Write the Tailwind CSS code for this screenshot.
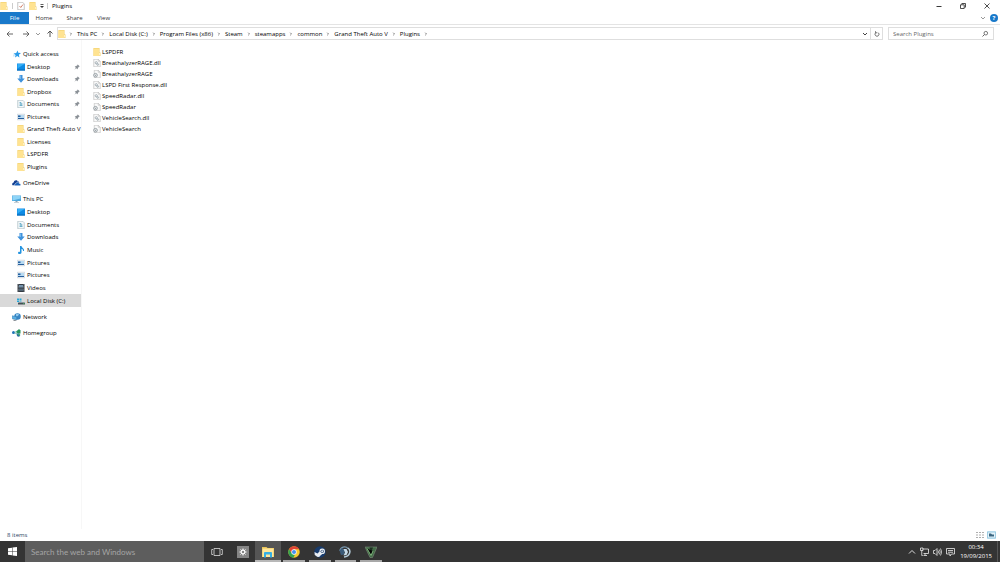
<!DOCTYPE html>
<html lang="en">
<head>
    <meta charset="UTF-8">
    <meta name="viewport" content="width=device-width, initial-scale=1.0">
    <title>Plugins</title>
    <script src="https://cdn.jsdelivr.net/npm/@tailwindcss/browser@4"></script>
</head>
<body class="flex h-screen flex-col overflow-hidden bg-white font-['Open_Sans',sans-serif] text-[6px] leading-[10px] text-black">

    <!-- Icon sprite -->
    <svg class="hidden">
        <symbol id="folder" viewBox="0 0 16 16"><path fill="#f0cd68" d="M1 0h12v9h2v7H1z"/><path fill="#ffe391" d="M1 1h11v15H1z"/><path fill="#fff1c0" d="M12 10h3v5h-3z"/></symbol>
        <symbol id="star" viewBox="0 0 16 16"><path fill="#2a9be8" d="M9 1l1.600 4.700 5.400.3-4.200 3.300 1 5.700-4.300-2.800L4 15l1.200-5L1 7l5.500-.8z"/><path stroke="#8fcdf6" d="M0 10h4M0 12h3"/></symbol>
        <symbol id="desktop" viewBox="0 0 16 16"><path fill="#0f8be4" d="M0 1h16v14H0z"/><path fill="#35b0f7" d="M1 2h14L1 11z"/><path fill="#0867b5" d="M0 13h16v2H0z"/></symbol>
        <symbol id="down" viewBox="0 0 16 16"><path fill="#3f92dc" d="M5 0h6v7h4.500L8 15.500.5 7H5z"/><path fill="#74b8ee" d="M6 1h2v7H6z"/></symbol>
        <symbol id="doc" viewBox="0 0 16 16"><path fill="#f4f8fa" stroke="#8ba0ab" d="M1.500.5h10l3 3v12h-13z"/><path fill="none" stroke="#4c9fbd" stroke-width="1.500" d="M5 5h3M5 8h6M5 11h6M8 5v6"/></symbol>
        <symbol id="pic" viewBox="0 0 16 16"><path fill="#fff" stroke="#a7b7c5" d="M.5 2.500h15v11H.5z"/><path fill="#b7daf2" d="M2 4h12v7H2z"/><path fill="#275f9e" d="M2 5h5v3H2zM2 10h12v2H2z"/></symbol>
        <symbol id="cloud" viewBox="0 0 20 16"><path fill="#123f91" d="M1 13c-2-4 1-6 3-6 0-5 7-7 9-2 2-.5 3 1 3 3l-7 5z"/><path fill="#1760b9" stroke="#fff" d="M8 14c-4-1-2-5 1-5 1-4 6-3 7 0 4 0 5 5 1 5z"/></symbol>
        <symbol id="pc" viewBox="0 0 18 16"><path fill="#4da8de" d="M0 1h18v11H0z"/><path fill="#8ed4f7" d="M1 2h16v5L1 11z"/><path fill="#8da4b4" d="M7 12h4v2h3v1H4v-1h3z"/></symbol>
        <symbol id="music" viewBox="0 0 16 16"><path fill="#2393df" d="M6 0h3c0 4 6 4 5 10h-2c0-3-1-4-3-4v7c0 4-7 4-7 1 0-2 2-3 4-2z"/></symbol>
        <symbol id="video" viewBox="0 0 16 16"><path fill="#343b43" d="M1 0h14v16H1z"/><path fill="#7593ad" d="M4 2h8v5H4z"/><path fill="#506474" d="M4 9h8v5H4z"/><path stroke="#c9d0d5" stroke-dasharray="1.500 1.500" d="M2.500 1v14M13.500 1v14"/></symbol>
        <symbol id="disk" viewBox="0 0 16 16"><path fill="#26a7d8" d="M0 3h4v3H0zM5 3h4v3H5zM0 7h4v3H0zM5 7h4v2H5z"/><path fill="#8b989f" d="M3 10h12l1 2H2z"/><path fill="#424e55" d="M2 12h14v3H2z"/><path fill="#57e064" d="M12 13h3v1h-3z"/></symbol>
        <symbol id="network" viewBox="0 0 18 16"><circle cx="11" cy="7" r="6.500" fill="#3886c5"/><path fill="#8ec8ed" d="M8 2l6 0-2 4-4 1z"/><path fill="#5bb0e4" stroke="#2a75ad" d="M.5 5.500l9 2v6l-9-2z"/><path fill="#888f95" d="M3 13l6 2v1H3z"/></symbol>
        <symbol id="homegroup" viewBox="0 0 18 16"><circle cx="3" cy="7" r="3" fill="#1e73b8"/><path stroke="#55a8a0" stroke-width="1.500" d="M5 7l7-4M5 7l7 5"/><path fill="#24945c" d="M9 5l5-5 3 3v6H9z"/><circle cx="13" cy="12" r="3.500" fill="#2c6e9e"/><path fill="#41b66f" d="M11 10h5v4z"/></symbol>
        <symbol id="dll" viewBox="0 0 16 16"><path fill="#fafafa" stroke="#aaa" d="M1.500.5h9l4 4v11h-13z"/><path fill="none" stroke="#aaa" d="M10.500.5v4h4"/><circle cx="6.500" cy="7.500" r="2.200" fill="none" stroke="#8d9ba3" stroke-width="1.500"/><circle cx="9.500" cy="11" r="1.700" fill="none" stroke="#8d9ba3" stroke-width="1.500"/></symbol>
        <symbol id="ini" viewBox="0 0 16 16"><path fill="#fafafa" stroke="#aaa" d="M2.500.5h8l4 4v11h-12z"/><path fill="none" stroke="#aaa" d="M10.500.5v4h4"/><circle cx="5" cy="10.500" r="3.700" fill="#e8eaeb" stroke="#838e94" stroke-width="1.500"/><circle cx="5" cy="10.500" r="1" fill="#77838a"/></symbol>
        <symbol id="pin" viewBox="0 0 16 16"><path fill="#8a9096" d="M10 1l5 5-1 1h-1l-3 4v2l-1 1-3-3-5 4 4-5-3-3 1-1h2l4-3V2z"/></symbol>
        <symbol id="chevron" viewBox="0 0 4 6"><path fill="none" stroke="#666" stroke-width=".8" d="M1.200 1.700L2.500 3 1.200 4.300"/></symbol>
        <symbol id="caret" viewBox="0 0 8 8"><path fill="none" stroke="currentColor" d="M2 3l2 2 2-2"/></symbol>
    </svg>

    <!-- Title bar -->
    <header class="flex h-3 shrink-0 items-center">
        <svg class="size-2"><use href="#folder"/></svg>
        <span class="ml-1 h-[6px] w-px bg-[#ccc]"></span>
        <button class="ml-1 block" aria-label="Properties"><svg class="size-2" viewBox="0 0 16 16"><path fill="#fff" stroke="#8c8c8c" d="M1.500.5h9l4 3v12h-13z"/><path fill="none" stroke="#c9674c" stroke-width="1.600" d="M5 8l2.500 3L12 5"/></svg></button>
        <button class="ml-1 block" aria-label="New folder"><svg class="size-2"><use href="#folder"/></svg></button>
        <button class="ml-px block" aria-label="Customize toolbar"><svg class="size-2" viewBox="0 0 8 8"><path stroke="#333" stroke-width=".8" d="M2.500 2.500h3"/><path fill="#333" d="M2 4h4L4 6z"/></svg></button>
        <span class="ml-px h-[6px] w-px bg-[#ccc]"></span>
        <h1 class="ml-1">Plugins</h1>
        <div class="ml-auto flex text-[#222]">
            <button class="flex w-6 justify-center" aria-label="Minimize"><svg class="size-2" viewBox="0 0 8 8"><path stroke="currentColor" stroke-width=".9" d="M1.500 4.500h5"/></svg></button>
            <button class="flex w-6 justify-center" aria-label="Restore"><svg class="size-2" viewBox="0 0 8 8"><path fill="none" stroke="currentColor" stroke-width=".8" d="M1.500 2.800h3.700v3.700H1.500zM2.800 2.500v-1h3.700v3.700h-1"/></svg></button>
            <button class="flex w-6 justify-center" aria-label="Close"><svg class="size-2" viewBox="0 0 8 8"><path stroke="currentColor" stroke-width=".8" d="M1.500 1.500l5 5m0-5l-5 5"/></svg></button>
            <span class="w-px"></span>
        </div>
    </header>

    <!-- Ribbon tabs -->
    <nav class="flex h-[13px] shrink-0 items-center border-b border-[#e4e4e4] text-[#333]">
        <button class="h-3 w-[29px] bg-[#1979ca] text-white">File</button>
        <button class="h-3 w-[30px]">Home</button>
        <button class="h-3 w-[31px]">Share</button>
        <button class="h-3 w-[27px]">View</button>
        <button class="ml-auto text-[#999]" aria-label="Expand ribbon"><svg class="size-2"><use href="#caret"/></svg></button>
        <button class="mr-[2px] ml-[3px] size-2 rounded-full bg-[#1979ca] leading-2 font-bold text-white" aria-label="Help">?</button>
    </nav>

    <!-- Address bar -->
    <div class="mt-[2px] flex h-[13px] shrink-0 items-center pr-[6px]">
        <div class="flex w-[57px] items-center pl-[6px] text-[#555]">
            <button aria-label="Back"><svg class="size-2" viewBox="0 0 8 8"><path fill="none" stroke="currentColor" stroke-width=".9" d="M7 4H1m2.500-2.500L1 4l2.500 2.500"/></svg></button>
            <button class="ml-2" aria-label="Forward"><svg class="size-2" viewBox="0 0 8 8"><path fill="none" stroke="currentColor" stroke-width=".9" d="M1 4h6M4.500 1.500L7 4 4.500 6.500"/></svg></button>
            <button class="ml-1 text-[#999]" aria-label="Recent locations"><svg class="size-2"><use href="#caret"/></svg></button>
            <button class="ml-1" aria-label="Up"><svg class="size-2" viewBox="0 0 8 8"><path fill="none" stroke="currentColor" stroke-width="1" d="M4 7V1M1.500 3.500L4 1l2.500 2.500"/></svg></button>
        </div>
        <div class="flex h-full flex-1 items-center border border-[#dedede]">
            <svg class="size-2"><use href="#folder"/></svg>
            <svg class="mr-1 ml-[3px] h-[6px] w-1"><use href="#chevron"/></svg>
            <button class="whitespace-nowrap">This PC</button>
            <svg class="mx-1 h-[6px] w-1"><use href="#chevron"/></svg>
            <button class="whitespace-nowrap">Local Disk (C:)</button>
            <svg class="mx-1 h-[6px] w-1"><use href="#chevron"/></svg>
            <button class="whitespace-nowrap">Program Files (x86)</button>
            <svg class="mx-1 h-[6px] w-1"><use href="#chevron"/></svg>
            <button>Steam</button>
            <svg class="mx-1 h-[6px] w-1"><use href="#chevron"/></svg>
            <button>steamapps</button>
            <svg class="mx-1 h-[6px] w-1"><use href="#chevron"/></svg>
            <button>common</button>
            <svg class="mx-1 h-[6px] w-1"><use href="#chevron"/></svg>
            <button class="whitespace-nowrap">Grand Theft Auto V</button>
            <svg class="mx-1 h-[6px] w-1"><use href="#chevron"/></svg>
            <button>Plugins</button>
            <svg class="mx-1 h-[6px] w-1"><use href="#chevron"/></svg>
            <button class="ml-auto px-px text-[#444]" aria-label="Previous locations"><svg class="size-2"><use href="#caret"/></svg></button>
            <button class="flex h-full w-3 items-center justify-center border-l border-[#dedede]" aria-label="Refresh"><svg class="size-2" viewBox="0 0 8 8"><path fill="none" stroke="#555" stroke-width=".8" d="M5.300 2.700A2 2 0 1 1 2.700 2.700M2.500 1.200v1.600h1.800"/></svg></button>
        </div>
        <label class="ml-[5px] flex h-full w-[106px] items-center border border-[#dedede] px-1">
            <input type="text" placeholder="Search Plugins" aria-label="Search Plugins" class="w-0 flex-1 outline-none placeholder:text-[#666]">
            <svg class="size-2" viewBox="0 0 8 8"><circle cx="4.800" cy="3.200" r="1.800" fill="none" stroke="#555" stroke-width=".8"/><path stroke="#555" stroke-width=".9" d="M3.500 4.500l-2 2"/></svg>
        </label>
    </div>

    <main class="flex min-h-0 flex-1">
        <!-- Navigation pane -->
        <aside class="flex w-[82px] flex-col gap-1 border-r border-[#f7f7f7] pt-2 whitespace-nowrap">
            <ul class="grid h-[125px] auto-rows-fr overflow-hidden">
                <li class="flex items-center pl-[13px]"><a href="#" class="flex items-center gap-[2px]"><svg class="size-2"><use href="#star"/></svg>Quick access</a></li>
                <li class="flex items-center justify-between pr-px pl-[17px]"><a href="#" class="flex items-center gap-[2px]"><svg class="size-2"><use href="#desktop"/></svg>Desktop</a><svg class="size-[6px]"><use href="#pin"/></svg></li>
                <li class="flex items-center justify-between pr-px pl-[17px]"><a href="#" class="flex items-center gap-[2px]"><svg class="size-2"><use href="#down"/></svg>Downloads</a><svg class="size-[6px]"><use href="#pin"/></svg></li>
                <li class="flex items-center justify-between pr-px pl-[17px]"><a href="#" class="flex items-center gap-[2px]"><svg class="size-2"><use href="#folder"/></svg>Dropbox</a><svg class="size-[6px]"><use href="#pin"/></svg></li>
                <li class="flex items-center justify-between pr-px pl-[17px]"><a href="#" class="flex items-center gap-[2px]"><svg class="size-2"><use href="#doc"/></svg>Documents</a><svg class="size-[6px]"><use href="#pin"/></svg></li>
                <li class="flex items-center justify-between pr-px pl-[17px]"><a href="#" class="flex items-center gap-[2px]"><svg class="size-2"><use href="#pic"/></svg>Pictures</a><svg class="size-[6px]"><use href="#pin"/></svg></li>
                <li class="flex items-center pl-[17px]"><a href="#" class="flex items-center gap-[2px]"><svg class="size-2 shrink-0"><use href="#folder"/></svg>Grand Theft Auto V</a></li>
                <li class="flex items-center pl-[17px]"><a href="#" class="flex items-center gap-[2px]"><svg class="size-2"><use href="#folder"/></svg>Licenses</a></li>
                <li class="flex items-center pl-[17px]"><a href="#" class="flex items-center gap-[2px]"><svg class="size-2"><use href="#folder"/></svg>LSPDFR</a></li>
                <li class="flex items-center pl-[17px]"><a href="#" class="flex items-center gap-[2px]"><svg class="size-2"><use href="#folder"/></svg>Plugins</a></li>
            </ul>
            <a href="#" class="flex h-3 items-center gap-[2px] pl-3"><svg class="h-2 w-[9px]"><use href="#cloud"/></svg>OneDrive</a>
            <ul class="grid h-[114px] auto-rows-fr">
                <li class="flex items-center pl-3"><a href="#" class="flex items-center gap-[2px]"><svg class="h-2 w-[9px]"><use href="#pc"/></svg>This PC</a></li>
                <li class="flex items-center pl-[17px]"><a href="#" class="flex items-center gap-[2px]"><svg class="size-2"><use href="#desktop"/></svg>Desktop</a></li>
                <li class="flex items-center pl-[17px]"><a href="#" class="flex items-center gap-[2px]"><svg class="size-2"><use href="#doc"/></svg>Documents</a></li>
                <li class="flex items-center pl-[17px]"><a href="#" class="flex items-center gap-[2px]"><svg class="size-2"><use href="#down"/></svg>Downloads</a></li>
                <li class="flex items-center pl-[17px]"><a href="#" class="flex items-center gap-[2px]"><svg class="size-2"><use href="#music"/></svg>Music</a></li>
                <li class="flex items-center pl-[17px]"><a href="#" class="flex items-center gap-[2px]"><svg class="size-2"><use href="#pic"/></svg>Pictures</a></li>
                <li class="flex items-center pl-[17px]"><a href="#" class="flex items-center gap-[2px]"><svg class="size-2"><use href="#pic"/></svg>Pictures</a></li>
                <li class="flex items-center pl-[17px]"><a href="#" class="flex items-center gap-[2px]"><svg class="size-2"><use href="#video"/></svg>Videos</a></li>
                <li class="flex items-center bg-[#d9d9d9] pl-[17px]"><a href="#" class="flex items-center gap-[2px]" aria-current="page"><svg class="size-2"><use href="#disk"/></svg>Local Disk (C:)</a></li>
            </ul>
            <a href="#" class="flex h-3 items-center gap-[2px] pl-3"><svg class="h-2 w-[9px]"><use href="#network"/></svg>Network</a>
            <a href="#" class="flex h-3 items-center gap-[2px] pl-3"><svg class="h-2 w-[9px]"><use href="#homegroup"/></svg>Homegroup</a>
        </aside>

        <!-- Files -->
        <ul class="flex-1 pt-[6px] pl-[11px]">
            <li class="flex h-[11px] items-center gap-px"><svg class="size-2"><use href="#folder"/></svg>LSPDFR</li>
            <li class="flex h-[11px] items-center gap-px"><svg class="size-2"><use href="#dll"/></svg>BreathalyzerRAGE.dll</li>
            <li class="flex h-[11px] items-center gap-px"><svg class="size-2"><use href="#ini"/></svg>BreathalyzerRAGE</li>
            <li class="flex h-[11px] items-center gap-px"><svg class="size-2"><use href="#dll"/></svg>LSPD First Response.dll</li>
            <li class="flex h-[11px] items-center gap-px"><svg class="size-2"><use href="#dll"/></svg>SpeedRadar.dll</li>
            <li class="flex h-[11px] items-center gap-px"><svg class="size-2"><use href="#ini"/></svg>SpeedRadar</li>
            <li class="flex h-[11px] items-center gap-px"><svg class="size-2"><use href="#dll"/></svg>VehicleSearch.dll</li>
            <li class="flex h-[11px] items-center gap-px"><svg class="size-2"><use href="#ini"/></svg>VehicleSearch</li>
        </ul>
    </main>

    <!-- Status bar -->
    <footer class="flex h-3 shrink-0 items-center pr-1 pl-[7px] text-[#2b3f5f]">
        <span>8 items</span>
        <button class="ml-auto" aria-label="Details view"><svg class="h-2 w-[10px]" viewBox="0 0 10 8"><path stroke="#999" stroke-width=".8" d="M1 1.500h2M1 4h2M1 6.500h2M4 1.500h2M4 4h2M4 6.500h2M7 1.500h2M7 4h2M7 6.500h2"/></svg></button>
        <button class="ml-[2px] bg-[#cce8f6]" aria-label="Large icons view"><svg class="h-2 w-[9px]" viewBox="0 0 9 8"><path fill="#e2f2fa" stroke="#8fc3dc" stroke-width=".8" d="M.5 1h8v6h-8z"/><path fill="#3b6681" d="M2 2.500h2l1 1h2v2H2z"/></svg></button>
    </footer>

    <!-- Taskbar -->
    <div class="flex h-[21px] shrink-0 bg-[#343434] text-white">
        <button class="flex w-[25px] items-center justify-center" aria-label="Start"><svg class="size-[9px]" viewBox="0 0 18 18"><path fill="#fff" d="M0 2.500l8-1.200v7.200H0zM9 1.200L18 0v8.500H9zM0 9.500h8v7.200l-8-1.200zM9 9.500h9V18l-9-1.200z"/></svg></button>
        <input type="text" placeholder="Search the web and Windows" aria-label="Search the web and Windows" class="w-[179px] bg-[#5d5d5d] px-[6px] font-[Lato,sans-serif] text-[8px] outline-none placeholder:text-[#a5a5a5]">
        <div class="grid w-[180px] grid-cols-7">
            <button class="flex items-center justify-center" aria-label="Task view"><svg class="h-[10px] w-3" viewBox="0 0 12 10"><path fill="none" stroke="#ddd" stroke-width=".8" d="M3 1.500h6v7H3zM2 2.500H.7v5H2M10 2.500h1.300v5H10"/></svg></button>
            <button class="flex items-center justify-center" aria-label="Settings"><svg class="size-3" viewBox="0 0 24 24"><path fill="#858585" d="M0 0h24v24H0z"/><circle cx="12" cy="12" r="3.700" fill="none" stroke="#fff" stroke-width="2.400"/><path stroke="#fff" stroke-width="2" d="M12 5v3m0 8v3M5 12h3m8 0h3M7 7l2 2m6 6l2 2M17 7l-2 2m-6 6l-2 2"/></svg></button>
            <button class="flex items-center justify-center border-b-2 border-[#b8b8b8] bg-[#555] pt-[2px]" aria-label="File Explorer"><svg class="size-3" viewBox="0 0 24 24"><path fill="#e9c558" d="M0 2h9l2 2h13v18H0z"/><path fill="#ffe69b" d="M1 5h22v17H1z"/><path fill="#36aee2" d="M4 14q0-2 2-2h12q2 0 2 2v9h-4v-6H8v6H4z"/></svg></button>
            <button class="mx-[2px] flex items-center justify-center border-b-2 border-[#a8a8a8] pt-[2px]" aria-label="Chrome"><svg class="size-3" viewBox="0 0 24 24"><circle cx="12" cy="12" r="11.500" fill="#f5ca2f"/><path fill="#df4335" d="M2 6.300a11.500 11.500 0 0 1 20.300.4H12L7.500 14.500z"/><path fill="#31a350" d="M2 6.300l5.500 8.200 4.500 2.700 2-.4-3.200 6.600A11.500 11.500 0 0 1 2 6.300z"/><circle cx="12" cy="12" r="5.300" fill="#fff"/><circle cx="12" cy="12" r="4.100" fill="#438ff0"/></svg></button>
            <button class="mx-[2px] flex items-center justify-center border-b-2 border-[#a8a8a8] pt-[2px]" aria-label="Steam"><svg class="size-3" viewBox="0 0 24 24"><circle cx="12" cy="12" r="11.500" fill="#183b6c"/><path fill="#e8edf2" d="M1 12l6 3 4-4a5.500 5.500 0 1 1 5.500 5l-4 3.500a4.500 4.500 0 0 1-8 .5L1.500 18z"/><circle cx="16.500" cy="10.500" r="3.200" fill="#183b6c"/><circle cx="16.500" cy="10.500" r="2.200" fill="#dfe7ef"/></svg></button>
            <button class="mx-[2px] flex items-center justify-center border-b-2 border-[#a8a8a8] pt-[2px]" aria-label="TeamSpeak"><svg class="size-3" viewBox="0 0 24 24"><path fill="none" stroke="#7796ad" stroke-width="2.500" d="M2 10C2 2 13-1 18 5"/><path fill="#3a5a78" d="M1 9l5-5 6 4-2 9-6 1z"/><path fill="#c7dbe8" d="M9 6h6l3 6-3 6-6 1 3-6z"/><path fill="none" stroke="#b3cad8" stroke-width="3" d="M18 4c7 5 4 17-8 18"/></svg></button>
            <button class="mx-[2px] flex items-center justify-center border-b-2 border-[#a8a8a8] pt-[2px]" aria-label="Grand Theft Auto V"><svg class="size-3" viewBox="0 0 24 24"><path fill="#436b47" stroke="#879a87" d="M0 2h24l-9 21h-5z"/><path fill="#1d3022" d="M9 3h7l-4 10z"/><path stroke="#80b57d" stroke-width="2" d="M4 5l8 14 4-9"/></svg></button>
        </div>
        <div class="ml-auto flex items-center gap-1">
            <button aria-label="Show hidden icons"><svg class="size-2" viewBox="0 0 8 8"><path fill="none" stroke="#eee" stroke-width=".9" d="M1 5.500l3-3 3 3"/></svg></button>
            <button aria-label="Network status"><svg class="h-[10px] w-[9px]" viewBox="0 0 18 20"><path fill="none" stroke="#eee" stroke-width="1.600" d="M5 4h12v9H7M10 13v3M7 17h7M1 2h5v5H1zM3.500 7v10h2"/></svg></button>
            <button aria-label="Volume"><svg class="h-[10px] w-[9px]" viewBox="0 0 18 20"><path fill="none" stroke="#eee" stroke-width="1.500" d="M1 7h3l4-4v14l-4-4H1zM10 7q2 3 0 6M12.500 5q4 5 0 10M15 3q5 7 0 14"/></svg></button>
            <button aria-label="Notifications"><svg class="h-[10px] w-[9px]" viewBox="0 0 18 20"><path fill="none" stroke="#eee" stroke-width="1.600" d="M1 3h16v11h-6l-3 4v-4H1zM4 7h10M4 10.500h10"/></svg></button>
            <time datetime="2015-09-19T00:34" class="ml-px text-center leading-[9px]">00:34<br>19/09/2015</time>
            <button class="ml-px h-[21px] w-[3px] border-l border-[#555]" aria-label="Show desktop"></button>
        </div>
    </div>
</body>
</html>
